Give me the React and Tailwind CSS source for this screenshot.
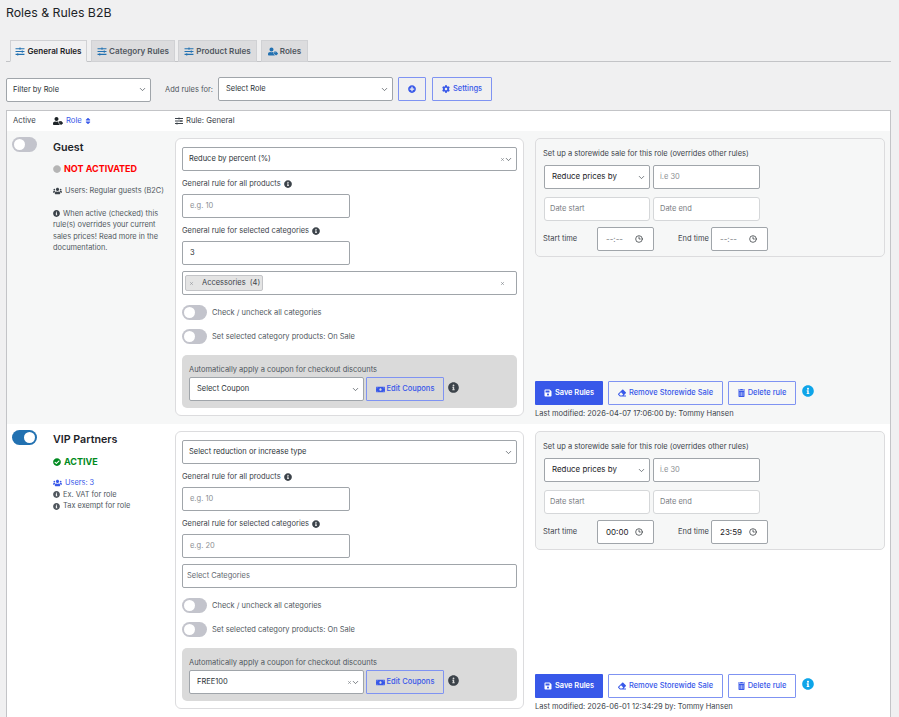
import React from 'react';
import { ChevronDown, Clock3, X } from 'lucide-react';
import {
  FaCheckCircle,
  FaCircle,
  FaCog,
  FaEraser,
  FaInfoCircle,
  FaMoneyBill,
  FaPlusCircle,
  FaSave,
  FaSlidersH,
  FaSort,
  FaTrashAlt,
  FaUserTag,
  FaUsers,
} from 'react-icons/fa';

const fieldClass = 'h-[24px] rounded-[2px] border border-[#a0a5aa] bg-white px-[7px] flex items-center text-[7.5px] text-[#2c3338] box-border';
const outlineBtn = 'h-[24px] flex items-center justify-center gap-[3px] rounded-[1px] border border-[#7f93f2] text-[#3858e9] text-[7.5px] font-medium';

function Tab({ icon: Icon, label, active, width }) {
  return (
    <div
      className={`h-[22px] flex items-center justify-center gap-[2px] border border-[#d0d1d4] text-[8.1px] font-semibold ${width} ${
        active ? 'bg-[#f0f0f1] border-b-[#f0f0f1] text-[#1d2327]' : 'bg-[#dcdcde] text-[#50575e]'
      }`}
    >
      <Icon className="text-[#2271b1] w-[10px] h-[9px]" />
      {label}
    </div>
  );
}

function Toggle({ on }) {
  return (
    <div className={`w-[25px] h-[15px] rounded-full flex items-center shrink-0 px-[2px] ${on ? 'bg-[#2271b1] justify-end' : 'bg-[#c3c4cc]'}`}>
      <div className="w-[11px] h-[11px] rounded-full bg-white" />
    </div>
  );
}

function Select({ label, width, double, height = 'h-[24px]', dark, tight }) {
  return (
    <div className={`${fieldClass} justify-between pr-[3px] ${tight ? '!pl-[6px]' : ''} ${height} ${width}`}>
      <span className={dark ? 'text-[7.9px] text-[#1d2327]' : ''}>{label}</span>
      <span className="flex items-center text-[#50575e]">
        {double && <X className="w-[5px] h-[5px] -mr-px" />}
        <ChevronDown className="w-[9px] h-[9px]" />
      </span>
    </div>
  );
}

function Info({ className = 'w-[8px] h-[8px] text-[#3c434a]' }) {
  return <FaInfoCircle className={`inline-block shrink-0 ${className}`} />;
}

function RuleCard({ rule }) {
  return (
    <div className="w-[349px] h-[278px] shrink-0 bg-white border border-[#dcdcde] rounded-[6px] px-[6px] pt-[8px]">
      <Select label={rule.type} width="w-[335px]" double={rule.typeClear} tight />
      <div className="mt-[7px] h-[12px] flex items-center gap-[3px] text-[7.5px] text-[#3c434a]">
        General rule for all products <Info />
      </div>
      <div className={`${fieldClass} w-[168px] mt-[4px] text-[#8c8f94]`}>e.g. 10</div>
      <div className="mt-[7px] h-[12px] flex items-center gap-[3px] text-[7.5px] text-[#3c434a]">
        General rule for selected categories <Info />
      </div>
      <div className={`${fieldClass} w-[168px] mt-[4px] ${rule.catValue ? '' : 'text-[#8c8f94]'}`}>
        {rule.catValue || 'e.g. 20'}
      </div>
      {rule.chip ? (
        <div className={`${fieldClass} w-[335px] h-[23px] mt-[6px] !px-[2px] justify-between`}>
          <span className="w-[78px] h-[16px] flex items-center gap-[8px] rounded-[2px] border border-[#c3c4c7] bg-[#e4e4e4] px-[3px] text-[#3c434a]">
            <X className="w-[5px] h-[5px] shrink-0 text-[#787c82]" />
            <span className="whitespace-pre">{rule.chip}</span>
          </span>
          <X className="w-[5px] h-[5px] mr-[9px] text-[#50575e]" />
        </div>
      ) : (
        <div className={`${fieldClass} w-[335px] h-[23px] mt-[6px] !px-[4px] text-[#646970]`}>Select Categories</div>
      )}
      <div className="mt-[10px] h-[15px] flex items-center gap-[5px] text-[7.5px] text-[#50575e]">
        <Toggle /> Check / uncheck all categories
      </div>
      <div className="mt-[9px] h-[15px] flex items-center gap-[5px] text-[7.5px] text-[#50575e]">
        <Toggle /> Set selected category products: On Sale
      </div>
      <div className="mt-[11px] w-[335px] h-[53px] rounded-[5px] bg-[#dadada] px-[7px] pt-[9px]">
        <div className="h-[11px] flex items-center text-[7.5px] text-[#50575e]">Automatically apply a coupon for checkout discounts</div>
        <div className="mt-[2px] flex items-center">
          <Select label={rule.coupon} width="w-[175px]" double={rule.couponClear} />
          <button className="ml-[2px] w-[78px] h-[24px] flex items-center justify-center gap-[2px] border border-[#7f93f2] rounded-[1px] text-[7.5px] font-medium text-[#3858e9]">
            <FaMoneyBill className="w-[9px] h-[9px]" /> Edit Coupons
          </button>
          <Info className="w-[11px] h-[11px] ml-[4px] -mt-[3px] text-[#3c434a]" />
        </div>
      </div>
    </div>
  );
}

function TimeField({ value }) {
  return (
    <div className={`${fieldClass} w-[57px] h-[23px] justify-between !px-[8px] !text-[8px] ${value === '--:--' ? '!text-[#787c82]' : '!text-[#1d2327]'}`}>
      {value}
      <Clock3 className="w-[8px] h-[8px] text-[#1d2327] mr-[2px]" />
    </div>
  );
}

function SaleColumn({ rule }) {
  return (
    <div className="flex-1 ml-[11px] flex flex-col justify-between">
      <div className="w-[350px] h-[119px] rounded-[5px] border border-[#dcdcde] bg-[#f6f7f7] px-[7px] pt-[10px]">
        <div className="h-[10px] flex items-center text-[7.5px] text-[#3c434a]">Set up a storewide sale for this role (overrides other rules)</div>
        <div className="mt-[6px] flex gap-[3px] ml-px">
          <Select label="Reduce prices by" width="w-[106px]" height="h-[23px]" dark />
          <div className={`${fieldClass} w-[107px] h-[23px] !px-[6px] text-[#8c8f94]`}>i.e 30</div>
        </div>
        <div className="mt-[8px] flex gap-[3px] ml-px">
          <div className={`${fieldClass} w-[106px] h-[23px] !px-[5px] !border-[#d5d7d9] rounded-[3px] text-[#787c82]`}>Date start</div>
          <div className={`${fieldClass} w-[107px] h-[23px] !px-[6px] !border-[#d5d7d9] rounded-[3px] text-[#787c82]`}>Date end</div>
        </div>
        <div className="mt-[6px] flex items-center text-[7.5px] text-[#3c434a]">
          <span className="w-[54px]">Start time</span>
          <TimeField value={rule.start} />
          <span className="ml-[24px] w-[33px]">End time</span>
          <TimeField value={rule.end} />
        </div>
      </div>
      <div className="pb-[4px]">
        <div className="flex items-center gap-[5px]">
          <button className="w-[68px] h-[24px] flex items-center justify-center gap-[3px] rounded-[1px] bg-[#3858e9] text-white text-[7.4px] font-semibold">
            <FaSave className="w-[8px] h-[8px]" /> Save Rules
          </button>
          <button className={`${outlineBtn} w-[115px]`}>
            <FaEraser className="w-[8px] h-[8px]" /> Remove Storewide Sale
          </button>
          <button className={`${outlineBtn} w-[68px]`}>
            <FaTrashAlt className="w-[7px] h-[8px]" /> Delete rule
          </button>
          <Info className="w-[12px] h-[12px] ml-px -mt-[4px] text-[#0ea5e9]" />
        </div>
        <div className="mt-[3px] h-[12px] flex items-center text-[7.5px] text-[#3c434a]">Last modified: {rule.modified} by: Tommy Hansen</div>
      </div>
    </div>
  );
}

const guest = {
  type: 'Reduce by percent (%)',
  typeClear: true,
  catValue: '3',
  chip: 'Accessories  (4)',
  coupon: 'Select Coupon',
  start: '--:--',
  end: '--:--',
  modified: '2026-04-07 17:06:00',
};

const vip = {
  type: 'Select reduction or increase type',
  coupon: 'FREE100',
  couponClear: true,
  start: '00:00',
  end: '23:59',
  modified: '2026-06-01 12:34:29',
};

export default function App() {
  return (
    <div className="w-[899px] h-[717px] overflow-hidden bg-[#f0f0f1] text-[#3c434a] font-['Inter',sans-serif]">
      <div className="pl-[6px] pr-[8px]">
        <h1 className="pt-[5px] h-[40px] text-[12.3px] leading-[15px] font-normal text-[#1d2327]">Roles &amp; Rules B2B</h1>

        <div className="h-[22px] pl-[4px] flex border-b border-[#c3c4c7]">
          <Tab icon={FaSlidersH} label="General Rules" active width="w-[77px] mr-[4px]" />
          <Tab icon={FaSlidersH} label="Category Rules" width="w-[84px] mr-[3px]" />
          <Tab icon={FaSlidersH} label="Product Rules" width="w-[79px] mr-[4px]" />
          <Tab icon={FaUserTag} label="Roles" width="w-[47px]" />
        </div>

        <div className="mt-[15px] h-[25px] flex items-center">
          <Select label="Filter by Role" width="w-[145px]" tight />
          <span className="ml-[14px] w-[53px] text-[7.5px] text-[#50575e]">Add rules for:</span>
          <div className="-mt-[1px]">
            <Select label="Select Role" width="w-[175px]" />
          </div>
          <button className="ml-[5px] -mt-[1px] w-[28px] h-[24px] flex items-center justify-center border border-[#7f93f2] rounded-[1px] text-[#3858e9]">
            <FaPlusCircle className="w-[8px] h-[8px]" />
          </button>
          <button className={`${outlineBtn} ml-[6px] -mt-[1px] w-[60px]`}>
            <FaCog className="w-[8px] h-[8px]" /> Settings
          </button>
        </div>

        <div className="mt-[8px] border border-[#c3c4c7] bg-white">
          <div className="h-[20px] flex items-center text-[7.7px] text-[#3c434a]">
            <span className="ml-[6px] w-[40px]">Active</span>
            <span className="w-[122px] flex items-center gap-[3px]">
              <FaUserTag className="w-[10px] h-[8px] text-[#1d2327]" />
              <span className="text-[#3858e9]">Role</span>
              <FaSort className="w-[6px] h-[8px] text-[#3858e9]" />
            </span>
            <span className="flex items-center gap-[3px]">
              <FaSlidersH className="w-[8px] h-[8px]" /> Rule: General
            </span>
          </div>

          <div className="h-[293px] flex bg-[#f6f7f7] pt-[7px]">
            <div className="w-[168px] shrink-0 flex">
              <div className="ml-[5px] -mt-px"><Toggle /></div>
              <div className="ml-[16px] w-[118px]">
                <div className="mt-[3px] h-[15px] flex items-center text-[10.7px] font-semibold text-[#1d2327]">Guest</div>
                <div className="mt-[7px] h-[12px] flex items-center gap-[3px] text-[9px] font-bold text-[#ff0000]">
                  <FaCircle className="w-[8px] h-[8px] text-[#b5b5b5]" /> NOT ACTIVATED
                </div>
                <div className="mt-[10px] h-[12px] flex items-center gap-[3px] whitespace-nowrap text-[7.4px] text-[#50575e]">
                  <FaUsers className="w-[9px] h-[8px] text-[#3c434a]" /> Users: Regular guests (B2C)
                </div>
                <p className="mt-[11px] w-[112px] text-[7.4px] leading-[11.3px] text-[#50575e]">
                  <Info className="w-[7px] h-[7px] text-[#3c434a] mr-[3px] -mt-[1px]" />
                  When active (checked) this rule(s) overrides your current sales prices! Read more in the documentation.
                </p>
              </div>
            </div>
            <RuleCard rule={guest} />
            <SaleColumn rule={guest} />
          </div>

          <div className="h-[293px] flex bg-white pt-[7px]">
            <div className="w-[168px] shrink-0 flex">
              <div className="ml-[5px] -mt-px"><Toggle on /></div>
              <div className="ml-[16px] w-[118px]">
                <div className="mt-[2px] h-[15px] flex items-center text-[10.7px] font-semibold text-[#1d2327]">VIP Partners</div>
                <div className="mt-[8px] h-[12px] flex items-center gap-[3px] text-[9px] font-bold text-[#008a20]">
                  <FaCheckCircle className="w-[8px] h-[8px]" /> ACTIVE
                </div>
                <div className="mt-[9px] h-[12px] flex items-center gap-[3px] text-[7.4px] text-[#3858e9]">
                  <FaUsers className="w-[9px] h-[8px]" /> Users: 3
                </div>
                <div className="h-[11px] flex items-center gap-[3px] text-[7.4px] text-[#50575e]">
                  <Info className="w-[7px] h-[7px]" /> Ex. VAT for role
                </div>
                <div className="h-[12px] flex items-center gap-[3px] text-[7.4px] text-[#50575e]">
                  <Info className="w-[7px] h-[7px]" /> Tax exempt for role
                </div>
              </div>
            </div>
            <RuleCard rule={vip} />
            <SaleColumn rule={vip} />
          </div>
        </div>
      </div>
    </div>
  );
}
